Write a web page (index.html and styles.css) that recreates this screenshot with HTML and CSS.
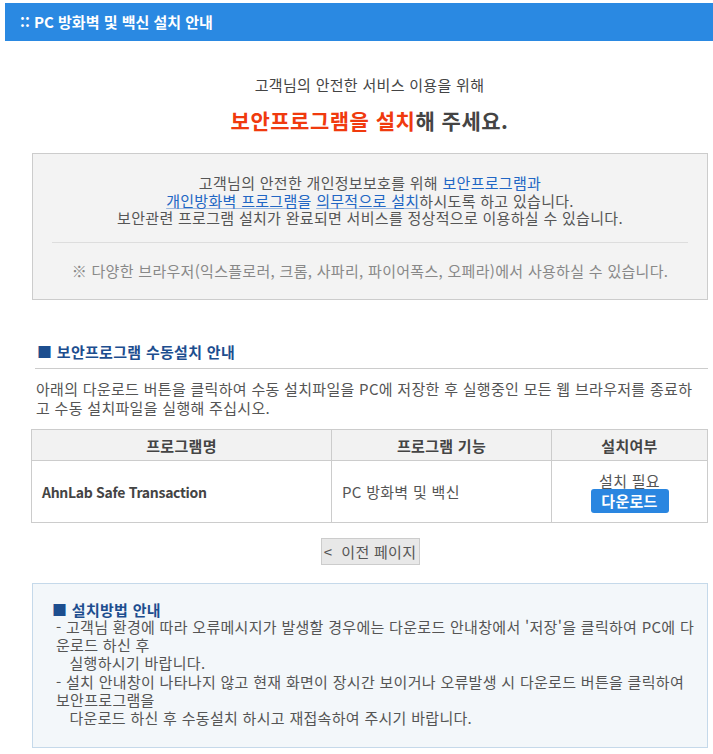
FILE: index.html
```html
<!DOCTYPE html>
<html lang="ko">
<head>
<meta charset="utf-8">
<title>PC 방화벽 및 백신 설치 안내</title>
<link rel="stylesheet" href="styles.css">
</head>
<body>
<div class="topbar">:: PC 방화벽 및 백신 설치 안내</div>
<div class="wrap">
  <div class="intro">
    <p class="intro-sub">고객님의 안전한 서비스 이용을 위해</p>
    <p class="intro-main"><span class="red">보안프로그램을 설치</span>해 주세요.</p>
  </div>

  <div class="notice">
    <p class="notice-text">고객님의 안전한 개인정보보호를 위해 <span class="blue">보안프로그램과<br><u>개인방화벽 프로그램</u>을 <u>의무적으로 설치</u></span>하시도록 하고 있습니다.<br>보안관련 프로그램 설치가 완료되면 서비스를 정상적으로 이용하실 수 있습니다.</p>
    <hr class="notice-line">
    <p class="notice-note">※ 다양한 브라우저(익스플로러, 크롬, 사파리, 파이어폭스, 오페라)에서 사용하실 수 있습니다.</p>
  </div>

  <h3 class="sec-title"><span class="sq">■</span> 보안프로그램 수동설치 안내</h3>
  <p class="desc">아래의 다운로드 버튼을 클릭하여 수동 설치파일을 PC에 저장한 후 실행중인 모든 웹 브라우저를 종료하고 수동 설치파일을 실행해 주십시오.</p>

  <table class="prog-table">
    <thead>
      <tr>
        <th class="c1">프로그램명</th>
        <th class="c2">프로그램 기능</th>
        <th class="c3">설치여부</th>
      </tr>
    </thead>
    <tbody>
      <tr>
        <td class="name">AhnLab Safe Transaction</td>
        <td class="func">PC 방화벽 및 백신</td>
        <td class="state">
          <div class="need">설치 필요</div>
          <a class="btn-down">다운로드</a>
        </td>
      </tr>
    </tbody>
  </table>

  <div class="actions">
    <button class="btn-prev">&lt;&nbsp;&nbsp;이전 페이지</button>
  </div>

  <div class="guide">
    <h4 class="guide-title"><span class="sq">■</span> 설치방법 안내</h4>
    <p class="guide-text">- 고객님 환경에 따라 오류메시지가 발생할 경우에는 다운로드 안내창에서 '저장'을 클릭하여 PC에 다운로드 하신 후<br>&nbsp;&nbsp;&nbsp;실행하시기 바랍니다.<br>- 설치 안내창이 나타나지 않고 현재 화면이 장시간 보이거나 오류발생 시 다운로드 버튼을 클릭하여 보안프로그램을<br>&nbsp;&nbsp;&nbsp;다운로드 하신 후 수동설치 하시고 재접속하여 주시기 바랍니다.</p>
  </div>
</div>
</body>
</html>
```
FILE: styles.css
```css
html, body {
  margin: 0;
  padding: 0;
  background: #fff;
}
body {
  font-family: "Noto Sans CJK KR", "Noto Sans", sans-serif;
  font-size: 15px;
  letter-spacing: 0.3px;
  color: #555;
}
p, h3, h4 {
  margin: 0;
}
.topbar {
  margin: 3px 0 0 5px;
  height: 38px;
  line-height: 38px;
  padding-left: 15px;
  background: #2a89e2;
  color: #fff;
  font-weight: bold;
  font-size: 15px;
  letter-spacing: 0;
}
.wrap {
  margin-left: 31px;
  width: 677px;
}
.intro {
  text-align: center;
  padding-top: 34px;
}
.intro-sub {
  line-height: 20px;
  color: #444;
}
.intro-main {
  margin-top: 11px;
  line-height: 28px;
  font-size: 21px;
  letter-spacing: 0.5px;
  font-weight: bold;
  color: #444;
}
.red {
  color: #f03a0e;
}
.notice {
  margin: 19px 0 0 1px;
  border: 1px solid #ccc;
  background: #f3f3f3;
  padding: 20px 19px 20px;
  text-align: center;
}
.notice-text {
  line-height: 17.5px;
  color: #555;
}
.blue {
  color: #2166c4;
}
.blue u {
  text-decoration: underline;
  text-decoration-color: #9db8de;
}
.notice-line {
  margin: 15px 0 19px;
  border: 0;
  border-top: 1px solid #ddd;
  height: 0;
}
.notice-note {
  line-height: 17.5px;
  color: #888;
}
.sec-title {
  margin-top: 42px;
  margin-left: 4px;
  padding: 0 0 6px 2px;
  border-bottom: 1px solid #ccc;
  font-size: 15px;
  line-height: 20px;
  color: #1d4e8f;
  font-weight: bold;
}
.sq {
  font-weight: normal;
  color: #1d4e8f;
}
.desc {
  margin-top: 10px;
  padding: 0 12px 0 5px;
  line-height: 19px;
  color: #555;
}
.prog-table {
  margin-top: 12px;
  width: 677px;
  border-collapse: collapse;
}
.prog-table th {
  height: 30px;
  padding: 0;
  background: #f2f2f2;
  border: 1px solid #ccc;
  color: #444;
  font-weight: bold;
  text-align: center;
}
.prog-table .c1 { width: 299px; }
.prog-table .c2 { width: 219px; }
.prog-table td {
  height: 59px;
  padding: 0 10px;
  border: 1px solid #ccc;
  color: #555;
}
.prog-table .name {
  font-weight: bold;
  font-size: 14px;
  letter-spacing: -0.3px;
  color: #444;
}
.prog-table .state {
  text-align: center;
  padding-top: 2px;
}
.need {
  line-height: 17px;
  color: #555;
}
.btn-down {
  display: inline-block;
  width: 78px;
  height: 24px;
  line-height: 24px;
  border-radius: 3px;
  background: #2a86e0;
  color: #fff;
  font-weight: bold;
  text-align: center;
}
.actions {
  margin-top: 15px;
  display: flex;
  justify-content: center;
}
.btn-prev {
  width: 99px;
  height: 27px;
  padding: 0;
  margin-left: 1px;
  border: 1px solid #ccc;
  background: #e8e8e8;
  color: #555;
  font-family: inherit;
  font-size: 15px;
  letter-spacing: 0.3px;
  line-height: 25px;
}
.guide {
  margin: 18px 0 0 1px;
  border: 1px solid #c5d9ea;
  background: #f3f7fa;
  padding: 17px 10px 20px 19px;
}
.guide-title {
  font-size: 15px;
  line-height: 17px;
  color: #1d4e8f;
  font-weight: bold;
}
.guide-text {
  padding-left: 4px;
  line-height: 18.2px;
  color: #555;
}
```
